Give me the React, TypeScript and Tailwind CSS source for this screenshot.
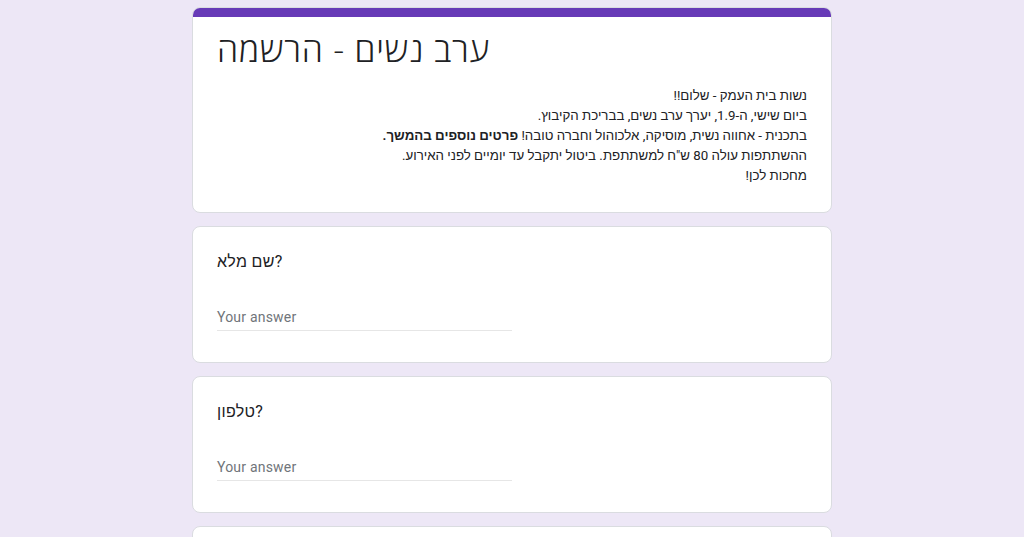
import React from "react";

const body = "font-['Roboto','Liberation_Sans',Arial,sans-serif]";

function Question({ title }: { title: string }) {
  return (
    <div className="bg-white rounded-lg border border-[#dadce0] px-6 pt-[23px] pb-[31px]">
      <div dir="ltr" className={`${body} text-[16px] leading-6 text-[#202124] tracking-[0.3px]`}>
        {title}
      </div>
      <div className="mt-[25px] w-1/2 h-8 border-b border-[#e6e6e6] flex items-center pt-[5px]">
        <span className={`${body} text-[14px] text-[#70757a] tracking-[0.2px]`}>Your answer</span>
      </div>
    </div>
  );
}

export default function App() {
  return (
    <div className="min-h-screen bg-[#ede7f6] pt-[7px] pb-10">
      <div className="w-[640px] mx-auto flex flex-col gap-[13px]">
        <div className="bg-white rounded-lg border border-[#dadce0] overflow-hidden">
          <div className="h-[10px] bg-[#673ab7] -mx-px -mt-px"></div>
          <div className="px-6 pt-[12px] pb-[26px]">
            <div
              dir="ltr"
              className="font-['Open_Sans','Liberation_Sans',sans-serif] font-light text-[34px] leading-[40px] tracking-[0.8px] text-[#202124]"
            >
              ערב נשים - הרשמה
            </div>
            <div
              dir="rtl"
              className={`${body} mt-[17px] text-[13.3px] leading-5 text-[#202124] text-right`}
            >
              <div>נשות בית העמק - שלום!!</div>
              <div>ביום שישי, ה-1.9, יערך ערב נשים, בבריכת הקיבוץ.</div>
              <div>
                בתכנית - אחווה נשית, מוסיקה, אלכוהול וחברה טובה!{" "}
                <b className="font-bold">פרטים נוספים בהמשך.</b>
              </div>
              <div>ההשתתפות עולה 80 ש"ח למשתתפת. ביטול יתקבל עד יומיים לפני האירוע.</div>
              <div>מחכות לכן!</div>
            </div>
          </div>
        </div>
        <Question title="שם מלא?" />
        <Question title="טלפון?" />
        <div className="bg-white rounded-lg border border-[#dadce0] h-[136px]"></div>
      </div>
    </div>
  );
}
